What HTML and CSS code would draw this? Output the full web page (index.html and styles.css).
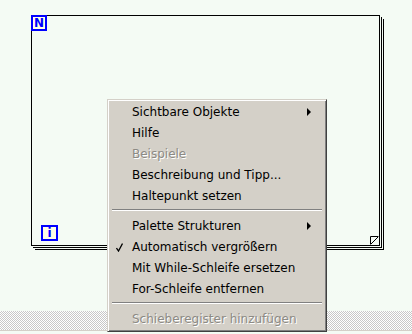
FILE: index.html
```html
<!DOCTYPE html>
<html lang="de">
<head>
    <meta charset="UTF-8">
    <title>For-Schleife</title>
    <link rel="stylesheet" href="styles.css">
</head>
<body>
    <div class="canvas">
        <div class="loop">
            <div class="term term-n">N</div>
            <div class="term term-i">i</div>
            <svg class="grip" width="9" height="9" viewBox="0 0 9 9">
                <path d="M0.5 8 V0.5 H8 M0.5 8.5 L8.5 0.5" stroke="#000" stroke-width="1" fill="none"/>
            </svg>
        </div>
    </div>
    <div class="hscroll"></div>
    <div class="bottom-edge"></div>

    <ul class="menu">
        <li class="item">Sichtbare Objekte <span class="arrow"></span></li>
        <li class="item">Hilfe</li>
        <li class="item disabled">Beispiele</li>
        <li class="item">Beschreibung und Tipp...</li>
        <li class="item">Haltepunkt setzen</li>
        <li class="sep"></li>
        <li class="item">Palette Strukturen <span class="arrow"></span></li>
        <li class="item checked">
            <svg class="check" width="7" height="9" viewBox="0 0 7 9">
                <path d="M0.5 5 L2.5 8 L6.5 0.5" stroke="#000" stroke-width="1.3" fill="none"/>
            </svg>
            Automatisch vergrößern
        </li>
        <li class="item">Mit While-Schleife ersetzen</li>
        <li class="item">For-Schleife entfernen</li>
        <li class="sep"></li>
        <li class="item disabled">Schieberegister hinzufügen</li>
    </ul>
</body>
</html>
```

FILE: styles.css
```css
body {
    margin: 0;
    padding: 0;
    background-color: #f4fbf4;
    font-family: 'DejaVu Sans', 'Verdana', sans-serif;
    overflow: hidden;
}
.canvas {
    height: 311px;
    padding: 15px 0 0 31px;
    box-sizing: border-box;
}
.loop {
    position: relative;
    width: 349px;
    height: 231px;
    border: 1px solid #000;
    box-sizing: border-box;
    background-color: #f4fbf4;
    box-shadow: 1px 1px 0 #f4fbf4, 2px 2px 0 #000, 3px 3px 0 #f4fbf4, 4px 4px 0 #000;
}
.term {
    position: absolute;
    width: 16px;
    height: 16px;
    box-sizing: border-box;
    border: 2px solid #0000ff;
    background-color: #ffffe6;
    color: #0000ff;
    font-size: 12px;
    font-weight: bold;
    line-height: 12px;
    text-align: center;
}
.term-n {
    left: -1px;
    top: -1px;
}
.term-i {
    left: 9px;
    top: 209px;
    width: 17px;
}
.grip {
    position: absolute;
    right: 0;
    bottom: 0;
}
.hscroll {
    height: 19px;
    background-color: #fff;
    background-image: conic-gradient(#c8c8c8 25%, #fff 0 50%, #c8c8c8 0 75%, #fff 0);
    background-size: 2px 2px;
}
.bottom-edge {
    height: 1px;
    background-color: #d4d0c8;
}
.menu {
    position: absolute;
    left: 107px;
    top: 99px;
    width: 220px;
    margin: 0;
    padding: 1px 1px 2px;
    list-style: none;
    box-sizing: border-box;
    background-color: #d4d0c8;
    border: 1px solid;
    border-color: #d4d0c8 #404040 #404040 #d4d0c8;
    box-shadow: inset 1px 1px 0 #fff, inset -1px -1px 0 #808080;
    font-size: 12px;
    color: #000;
}
.item {
    position: relative;
    height: 21px;
    line-height: 22px;
    padding-left: 23px;
}
.disabled {
    color: #8c8a84;
    text-shadow: 1px 1px 0 #fff;
}
.arrow {
    position: absolute;
    left: 198px;
    top: 7px;
    width: 0;
    height: 0;
    border-top: 4px solid transparent;
    border-bottom: 4px solid transparent;
    border-left: 4px solid #000;
}
.check {
    position: absolute;
    left: 7px;
    top: 7px;
}
.sep {
    height: 9px;
    margin: 0 3px;
    background:
        linear-gradient(#808080, #808080) 0 3px / 100% 1px no-repeat,
        linear-gradient(#fff, #fff) 0 4px / 100% 1px no-repeat;
}
```
